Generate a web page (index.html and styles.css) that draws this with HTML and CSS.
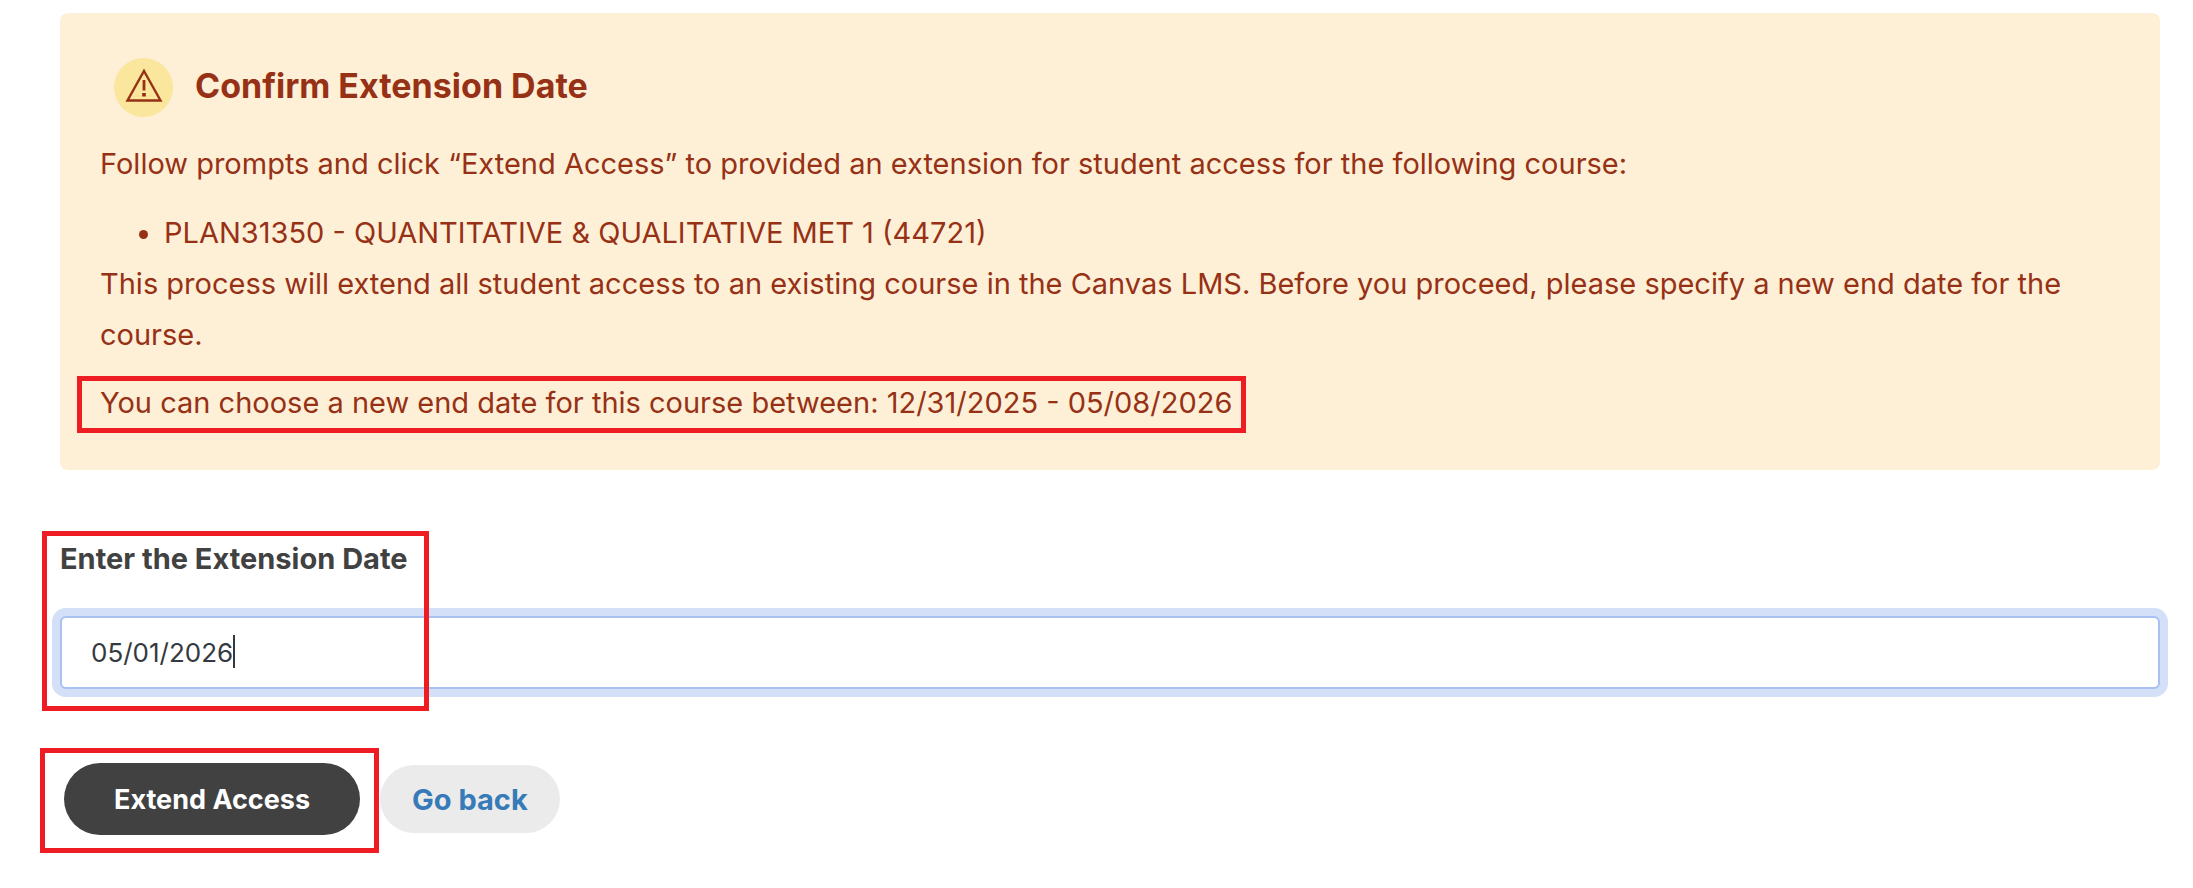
FILE: index.html
```
<!DOCTYPE html>
<html lang="en">
<head>
  <meta charset="UTF-8">
  <meta name="viewport" content="width=device-width, initial-scale=1.0">
  <title>Confirm Extension Date</title>
  <link rel="stylesheet" href="styles.css">
</head>
<body>

  <main class="page">
    <section class="notice">
      <div class="notice-header">
        <span class="notice-icon">
          <svg width="40" height="40" viewBox="0 0 40 40" fill="none" stroke="currentColor" aria-hidden="true">
            <path d="M20 3 L36.5 32.5 H3.5 Z" stroke-width="2.4"/>
            <path d="M20 12 V22.5" stroke-width="2.8"/>
            <path d="M20 25 V28.5" stroke-width="3.8"/>
          </svg>
        </span>
        <h2>Confirm Extension Date</h2>
      </div>
      <p>Follow prompts and click “Extend Access” to provided an extension for student access for the following course:</p>
      <ul>
        <li>PLAN31350 - QUANTITATIVE &amp; QUALITATIVE MET 1 (44721)</li>
      </ul>
      <p class="notice-detail">This process will extend all student access to an existing course in the Canvas LMS. Before you proceed, please specify a new end date for the course.</p>
      <p class="marked marked-range">You can choose a new end date for this course between: 12/31/2025 - 05/08/2026</p>
    </section>

    <form class="extend-form">
      <div class="field marked marked-field">
        <label for="extensionDate">Enter the Extension Date</label>
        <div class="input-wrap">
          <input type="text" id="extensionDate" value="05/01/2026">
          <span class="caret"></span>
        </div>
      </div>

      <div class="actions">
        <div class="marked marked-button">
          <button type="button" class="btn btn-primary">Extend Access</button>
        </div>
        <button type="button" class="btn btn-back">Go back</button>
      </div>
    </form>
  </main>

</body>
</html>
```
FILE: styles.css
```
* {
  box-sizing: border-box;
}

body {
  margin: 0;
  background-color: #ffffff;
  color: #414141;
  font-family: Inter, sans-serif;
}

.page {
  padding: 13px 33px 35px 60px;
}

/* Warning notice */
.notice {
  padding: 45px 40px 42px;
  background-color: #fdf0d6;
  border-radius: 8px;
  color: #973116;
  font-size: 29px;
  font-weight: 400;
  line-height: 51px;
}

.notice-header {
  display: flex;
  align-items: center;
  gap: 22px;
  margin-left: 14px;
}

.notice-icon {
  display: flex;
  justify-content: center;
  align-items: center;
  width: 59px;
  height: 59px;
  border-radius: 50%;
  background-color: #fae69c;
}

.notice h2 {
  margin: 0;
  padding-bottom: 4px;
  font-size: 34px;
  font-weight: 700;
}

.notice p {
  margin: 21px 0 0;
}

.notice ul {
  margin: 18px 0 0;
  padding-left: 64px;
}

.notice .notice-detail {
  margin-top: 0;
}

.notice .marked-range {
  width: fit-content;
  margin-top: 17px;
}

/* Red marker boxes */
.marked {
  position: relative;
}

.marked::after {
  content: "";
  position: absolute;
  box-sizing: border-box;
  border: 5px solid #ee1c23;
  pointer-events: none;
}

.marked-range::after {
  inset: -1px -14px -5px -23px;
}

.marked-field::after {
  top: -4px;
  left: -18px;
  bottom: -22px;
  width: 387px;
}

.marked-button::after {
  inset: -15px -19px -18px -24px;
}

/* Form */
.extend-form {
  margin-top: 65px;
}

.field label {
  display: block;
  margin-bottom: 33px;
  font-size: 29px;
  font-weight: 700;
  line-height: 48px;
}

.input-wrap {
  position: relative;
}

.field input {
  display: block;
  width: 100%;
  height: 73px;
  padding: 0 29px;
  border: 2px solid #a9c0f3;
  border-radius: 6px;
  outline: none;
  box-shadow: 0 0 0 8px #d4e0f8;
  background-color: #ffffff;
  color: #343a40;
  font-family: inherit;
  font-size: 26px;
}

.caret {
  position: absolute;
  top: 19px;
  left: 173px;
  width: 2px;
  height: 33px;
  background-color: #343a40;
}

.actions {
  display: flex;
  align-items: center;
  gap: 20px;
  margin-top: 74px;
  padding-left: 4px;
}

.btn {
  display: block;
  border: none;
  border-radius: 36px;
  font-family: inherit;
  font-weight: 700;
  cursor: pointer;
}

.btn-primary {
  height: 72px;
  padding: 0 50px;
  background-color: #414141;
  color: #ffffff;
  font-size: 27px;
}

.btn-back {
  height: 68px;
  padding: 0 32px;
  background-color: #ebebeb;
  color: #377ab8;
  font-size: 29px;
}
```
